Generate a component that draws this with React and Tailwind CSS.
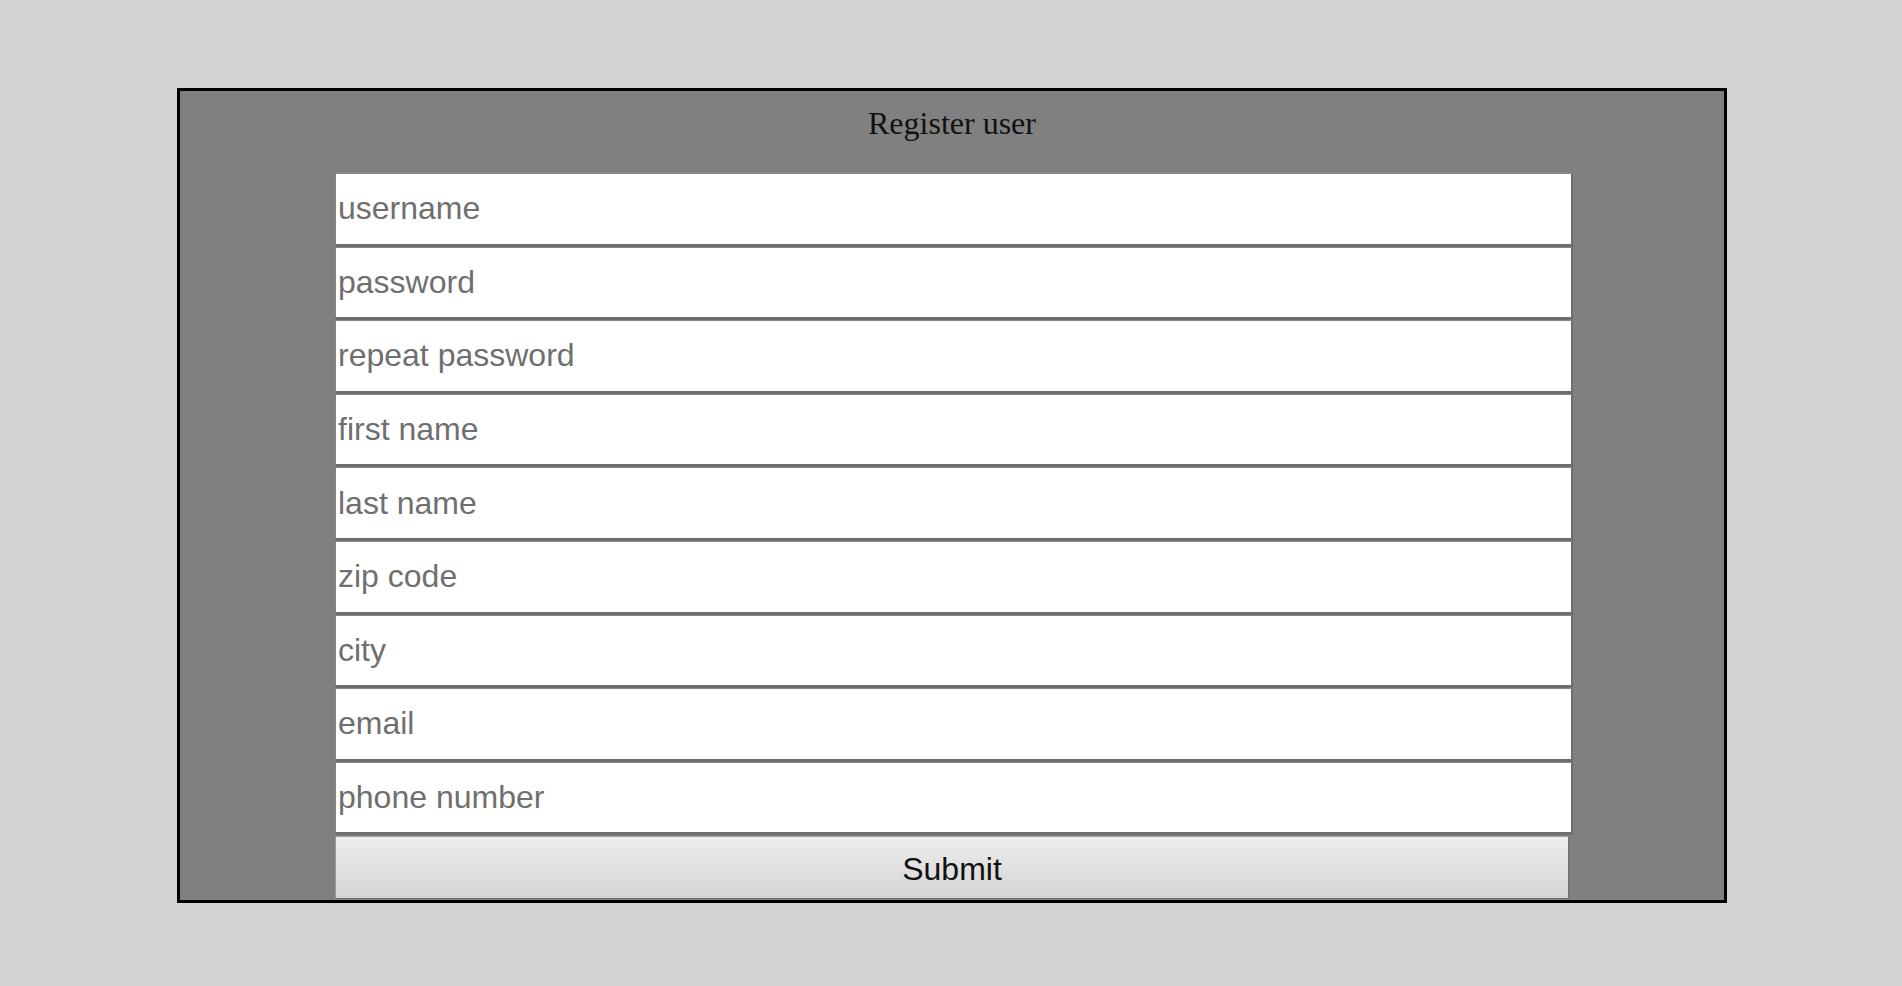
import React from "react";

const fields = [
  "username",
  "password",
  "repeat password",
  "first name",
  "last name",
  "zip code",
  "city",
  "email",
  "phone number",
];

export default function App() {
  return (
    <div className="min-h-screen w-full bg-[#d3d3d3] pt-[88px]">
      <div className="ml-[177px] box-border h-[815px] w-[1550px] overflow-hidden border-[3px] border-black bg-[#808080]">
        <div
          className="pt-[14px] text-center text-[32px] leading-[37px] text-[#111]"
          style={{ fontFamily: '"Liberation Serif", "Times New Roman", serif' }}
        >
          Register user
        </div>
        <form
          className="ml-[155px] mt-[31px] flex w-[1238px] flex-col items-start"
          style={{ fontFamily: '"Liberation Sans", Arial, sans-serif' }}
          onSubmit={(e) => e.preventDefault()}
        >
          {fields.map((f) => (
            <input
              key={f}
              type="text"
              placeholder={f}
              className="box-border block h-[73.6px] w-[1238px] border-t border-l border-r-2 border-b-[3px] border-t-[#8a8a8a] border-l-[#8a8a8a] border-r-[#6e6e6e] border-b-[#6e6e6e] bg-white px-[2px] text-[32px] leading-[37px] text-[#222] outline-none placeholder:text-[#6f6f6f]"
            />
          ))}
          <button
            type="submit"
            className="mt-[1px] box-border block h-[63px] w-[1234px] border border-t-[#9a9a9a] border-l-[#9a9a9a] border-r-[#707070] border-b-[#707070] bg-gradient-to-b from-[#ededed] to-[#d5d5d5] pt-[3px] text-center text-[32px] leading-[37px] text-[#111]"
          >
            Submit
          </button>
        </form>
      </div>
    </div>
  );
}
